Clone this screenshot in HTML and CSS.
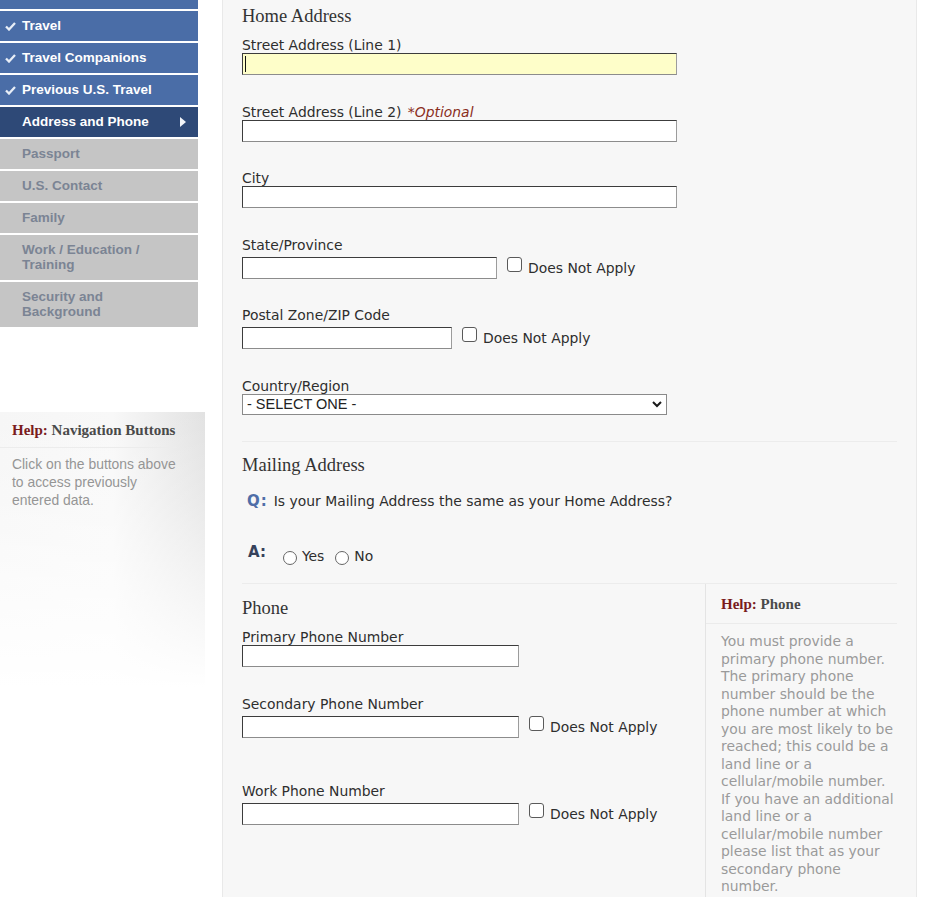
FILE: index.html
```html
<!DOCTYPE html>
<html lang="en">
<head>
<meta charset="utf-8">
<title>Address and Phone</title>
<link rel="stylesheet" href="styles.css">
</head>
<body>
<div class="page">
  <aside class="side">
    <nav class="nav">
      <div class="nav-stub"></div>
      <a class="nav-item done"><span class="ico"><svg width="11" height="9" viewBox="0 0 11 9"><path d="M1 4.5 L4 7.5 L10 1" fill="none" stroke="#e8eef7" stroke-width="2.3"/></svg></span><span class="txt">Travel</span></a>
      <a class="nav-item done"><span class="ico"><svg width="11" height="9" viewBox="0 0 11 9"><path d="M1 4.5 L4 7.5 L10 1" fill="none" stroke="#e8eef7" stroke-width="2.3"/></svg></span><span class="txt">Travel Companions</span></a>
      <a class="nav-item done"><span class="ico"><svg width="11" height="9" viewBox="0 0 11 9"><path d="M1 4.5 L4 7.5 L10 1" fill="none" stroke="#e8eef7" stroke-width="2.3"/></svg></span><span class="txt">Previous U.S. Travel</span></a>
      <a class="nav-item active"><span class="ico"></span><span class="txt">Address and Phone</span><span class="arrow"></span></a>
      <a class="nav-item todo"><span class="ico"></span><span class="txt">Passport</span></a>
      <a class="nav-item todo"><span class="ico"></span><span class="txt">U.S. Contact</span></a>
      <a class="nav-item todo"><span class="ico"></span><span class="txt">Family</span></a>
      <a class="nav-item todo"><span class="ico"></span><span class="txt">Work / Education / Training</span></a>
      <a class="nav-item todo"><span class="ico"></span><span class="txt">Security and Background</span></a>
    </nav>
    <div class="help-nav">
      <div class="help-nav-title"><span class="help-key">Help:</span> Navigation Buttons</div>
      <p class="help-nav-body">Click on the buttons above to access previously entered data.</p>
    </div>
  </aside>

  <main class="panel">
    <section class="home">
      <h2 class="sec-title">Home Address</h2>
      <div class="field">
        <label class="lbl">Street Address (Line 1)</label>
        <span class="focus-wrap"><input class="tin w-435 focused" type="text"><span class="caret"></span></span>
      </div>
      <div class="field">
        <label class="lbl">Street Address (Line 2) <em class="opt-note">*Optional</em></label>
        <input class="tin w-435" type="text">
      </div>
      <div class="field">
        <label class="lbl">City</label>
        <input class="tin w-435" type="text">
      </div>
      <div class="field">
        <label class="lbl">State/Province</label>
        <div class="row">
          <input class="tin w-255" type="text">
          <input class="chk" type="checkbox">
          <span class="dna">Does Not Apply</span>
        </div>
      </div>
      <div class="field">
        <label class="lbl">Postal Zone/ZIP Code</label>
        <div class="row">
          <input class="tin w-210" type="text">
          <input class="chk" type="checkbox">
          <span class="dna">Does Not Apply</span>
        </div>
      </div>
      <div class="field last">
        <label class="lbl">Country/Region</label>
        <span class="sel-wrap">
          <select class="sel"><option>- SELECT ONE -</option></select>
          <svg class="chev" width="10" height="7" viewBox="0 0 10 7"><path d="M1 1 L5 5 L9 1" fill="none" stroke="#1a1a1a" stroke-width="2"/></svg>
        </span>
      </div>
    </section>

    <hr class="sep sep-home">

    <section class="mailing">
      <h2 class="sec-title">Mailing Address</h2>
      <div class="q-row">
        <span class="q-key">Q:</span>
        <span class="q-text">Is your Mailing Address the same as your Home Address?</span>
      </div>
      <div class="a-row">
        <span class="a-key">A:</span>
        <div class="opts">
          <input class="rad" type="radio" name="same"><span class="opt-lbl">Yes</span>
          <input class="rad rad-2" type="radio" name="same"><span class="opt-lbl">No</span>
        </div>
      </div>
    </section>

    <hr class="sep sep-mail">

    <section class="phone">
      <div class="phone-fields">
        <h2 class="sec-title">Phone</h2>
        <div class="field">
          <label class="lbl">Primary Phone Number</label>
          <input class="tin w-277" type="text">
        </div>
        <div class="field tall">
          <label class="lbl">Secondary Phone Number</label>
          <div class="row">
            <input class="tin w-277" type="text">
            <input class="chk" type="checkbox">
            <span class="dna">Does Not Apply</span>
          </div>
        </div>
        <div class="field">
          <label class="lbl">Work Phone Number</label>
          <div class="row">
            <input class="tin w-277" type="text">
            <input class="chk" type="checkbox">
            <span class="dna">Does Not Apply</span>
          </div>
        </div>
      </div>
      <aside class="help-phone">
        <div class="help-phone-title"><span class="help-key">Help:</span> Phone</div>
        <p class="help-phone-body">You must provide a primary phone number. The primary phone number should be the phone number at which you are most likely to be reached; this could be a land line or a cellular/mobile number. If you have an additional land line or a cellular/mobile number please list that as your secondary phone number.</p>
      </aside>
    </section>
  </main>
</div>
</body>
</html>
```

FILE: styles.css
```css
* { box-sizing: border-box; }

html, body {
  margin: 0;
  padding: 0;
  background: #ffffff;
}

body {
  font-family: "DejaVu Sans", Verdana, sans-serif;
  font-size: 13.9px;
  color: #2e2e2e;
  overflow: hidden;
  height: 897px;
}

.page {
  display: flex;
  align-items: flex-start;
  height: 897px;
}

/* ---------- left column ---------- */
.side {
  width: 222px;
  flex: none;
}

.nav {
  width: 198px;
  display: flex;
  flex-direction: column;
  gap: 2px;
}

.nav-stub {
  height: 9px;
  background: #4a6da7;
}

.nav-item {
  display: flex;
  align-items: center;
  min-height: 30px;
  padding: 7px 30px 8px 5px;
  font-family: "Liberation Sans", Arial, sans-serif;
  font-weight: bold;
  font-size: 13.5px;
  line-height: 15px;
  text-decoration: none;
}

.nav-item .ico {
  width: 17px;
  flex: none;
  display: flex;
  align-items: center;
  padding-top: 1px;
}

.nav-item .txt { flex: 1; }

.nav-item.done {
  background: #4a6da7;
  color: #ffffff;
}

.nav-item.active {
  background: #2e4977;
  color: #ffffff;
  padding-right: 12px;
}

.nav-item.todo {
  background: #c5c5c5;
  color: #7b8494;
}

.arrow {
  width: 0;
  height: 0;
  border-top: 5px solid transparent;
  border-bottom: 5px solid transparent;
  border-left: 6px solid #f2f4f8;
  flex: none;
}

.help-nav {
  margin-top: 85px;
  width: 205px;
  height: 290px;
  background:
    linear-gradient(to bottom, rgba(255,255,255,0) 0%, rgba(255,255,255,0.25) 30%, #ffffff 95%),
    linear-gradient(to right, #f6f6f6 0%, #f8f8f8 55%, #e2e2e2 100%);
}

.help-nav-title {
  margin-right: 28px;
  padding: 9px 0 8px 12px;
  border-bottom: 1px solid #ececec;
  font-family: "Liberation Serif", "Times New Roman", serif;
  font-weight: bold;
  font-size: 15px;
  line-height: 18px;
  color: #4a4a4a;
}

.help-key { color: #7a1c1c; }

.help-nav-body {
  margin: 7px 0 0;
  padding: 0 23px 0 12px;
  font-family: "Liberation Sans", Arial, sans-serif;
  font-size: 13.9px;
  line-height: 18px;
  color: #959595;
}

/* ---------- main panel ---------- */
.panel {
  width: 695px;
  flex: none;
  min-height: 897px;
  background: #f7f7f7;
  border-left: 1px solid #e9e9e9;
  border-right: 1px solid #e9e9e9;
  padding: 5px 19px 0 19px;
}

.sec-title {
  margin: 0 0 10px;
  font-family: "Liberation Serif", "Times New Roman", serif;
  font-weight: normal;
  font-size: 18.5px;
  line-height: 22px;
  color: #333333;
}

.field { margin-bottom: 28.5px; }
.field.last { margin-bottom: 0; }

.lbl {
  display: block;
  line-height: 16px;
  color: #2e2e2e;
}

.opt-note {
  margin-left: 2px;
  color: #8a2d1c;
  font-style: italic;
}

.tin {
  display: block;
  height: 22px;
  margin: 0;
  padding: 0 3px;
  background: #ffffff;
  border: 1px solid;
  border-color: #3c3c3c #9c9c9c #8c8c8c #3c3c3c;
  border-radius: 0;
  font: inherit;
  outline: none;
}

.tin.focused { background: #fefec9; }

.w-435 { width: 435px; }
.w-255 { width: 255px; }
.w-210 { width: 210px; }
.w-277 { width: 277px; }

.focus-wrap {
  position: relative;
  display: block;
  width: 435px;
}

.caret {
  position: absolute;
  left: 3px;
  top: 3px;
  width: 1px;
  height: 16px;
  background: #111111;
}

.row {
  display: flex;
  align-items: flex-start;
  padding-top: 4px;
}

.chk {
  appearance: none;
  -webkit-appearance: none;
  width: 15px;
  height: 15px;
  margin: 0 0 0 10px;
  border: 1px solid #5a5a5a;
  border-radius: 3px;
  background: #ffffff;
  flex: none;
}

.dna {
  margin: 3px 0 0 6px;
  line-height: 17px;
  color: #2e2e2e;
}

.sel-wrap {
  position: relative;
  display: block;
  width: 425px;
}

.sel {
  appearance: none;
  -webkit-appearance: none;
  display: block;
  width: 425px;
  height: 21px;
  margin: 0;
  padding: 0 0 0 4px;
  background: #ffffff;
  border: 1px solid #8a8a8a;
  border-radius: 0;
  font-family: "Liberation Sans", Arial, sans-serif;
  font-size: 14.5px;
  color: #222222;
}

.chev {
  position: absolute;
  right: 5px;
  top: 7px;
}

.sep {
  margin: 0;
  border: 0;
  border-top: 1px solid #ececec;
  height: 0;
}

.sep-home { margin-top: 26.5px; }

.mailing { padding-top: 12px; }

.q-row {
  display: flex;
  align-items: baseline;
  margin-top: 15px;
  padding-left: 5px;
  line-height: 20px;
}

.q-key {
  font-weight: bold;
  font-size: 15px;
  letter-spacing: 1px;
  color: #4f6ea8;
  margin-right: 6px;
}

.a-row {
  display: flex;
  align-items: flex-start;
  margin-top: 31px;
  padding-left: 6px;
  line-height: 20px;
}

.a-key {
  font-weight: bold;
  font-size: 15px;
  color: #35415a;
  margin-right: 17px;
}

.opts {
  display: flex;
  align-items: flex-start;
  margin-top: 6px;
  line-height: 17px;
}

.rad {
  appearance: none;
  -webkit-appearance: none;
  width: 14px;
  height: 14px;
  margin: 3px 5px 0 0;
  border: 1px solid #666666;
  border-radius: 50%;
  background: #ffffff;
  flex: none;
}

.rad-2 { margin-left: 11px; }

.opt-lbl + .rad-2 { margin-left: 11px; }

.sep-mail { margin-top: 18px; }

.phone {
  display: flex;
  align-items: stretch;
}

.phone-fields {
  flex: 1;
  padding-top: 13px;
}

.field.tall { margin-bottom: 45px; }

.help-phone {
  width: 192px;
  flex: none;
  border-left: 1px solid #e4e4e4;
  min-height: 313px;
}

.help-phone-title {
  padding: 11px 0 10px 15px;
  border-bottom: 1px solid #ebebeb;
  font-family: "Liberation Serif", "Times New Roman", serif;
  font-weight: bold;
  font-size: 15px;
  line-height: 18px;
  color: #4a4a4a;
}

.help-phone-body {
  margin: 9px 0 0;
  padding-left: 15px;
  font-size: 13.9px;
  line-height: 17.5px;
  color: #9a9a9a;
}
```
